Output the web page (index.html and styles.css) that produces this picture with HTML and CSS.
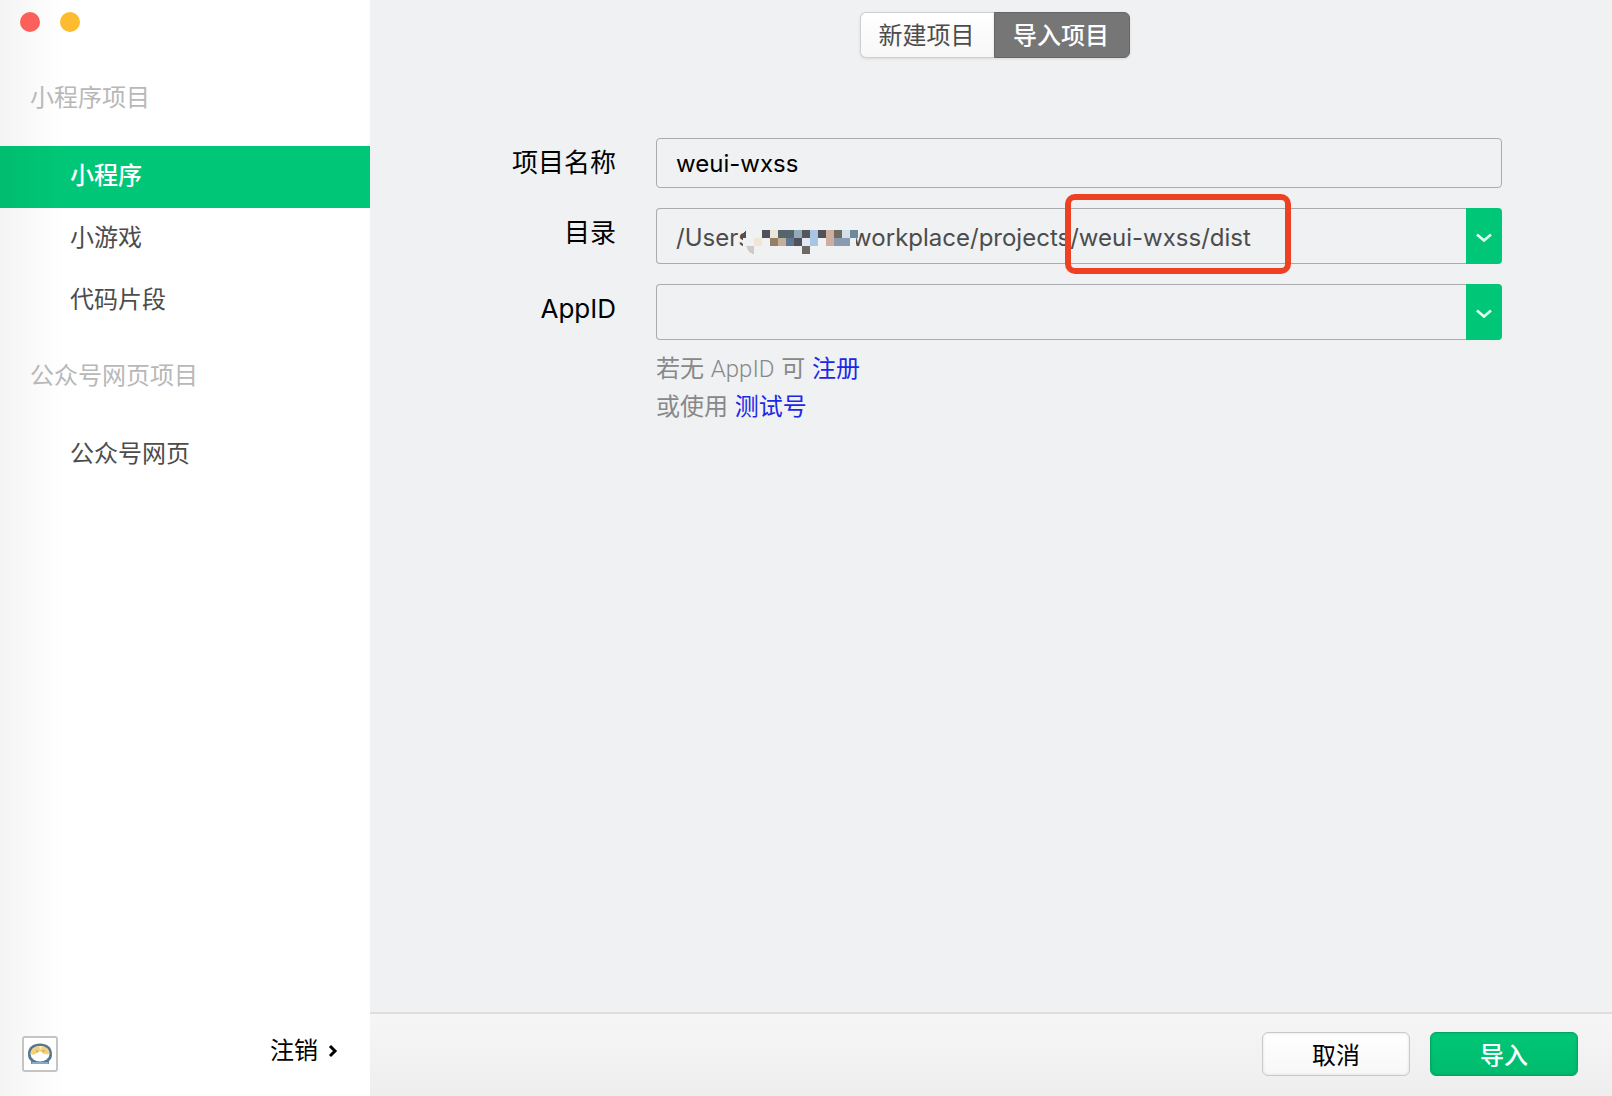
FILE: index.html
```html
<!DOCTYPE html>
<html lang="zh-CN">
<head>
<meta charset="utf-8">
<title>导入项目</title>
<link rel="stylesheet" href="styles.css">
</head>
<body>
<div class="window">
  <aside class="sidebar">
    <div class="window-controls">
      <button class="dot dot-close" type="button" aria-label="关闭"></button>
      <button class="dot dot-minimize" type="button" aria-label="最小化"></button>
    </div>
    <nav class="nav">
      <h2 class="nav-title">小程序项目</h2>
      <a class="nav-item active" href="#miniprogram">小程序</a>
      <a class="nav-item" href="#game">小游戏</a>
      <a class="nav-item" href="#snippet">代码片段</a>
      <h2 class="nav-title">公众号网页项目</h2>
      <a class="nav-item" href="#web">公众号网页</a>
    </nav>
    <div class="account">
      <svg class="avatar" viewBox="0 0 36 36" aria-hidden="true">
        <rect x="1" y="1" width="34" height="34" rx="2" fill="#fff" stroke="#c4c4c4" stroke-width="2"/>
        <path d="M9 28 V25 C6.500 23 6 21 6 18 C6 11 11 7.500 18 7.500 C25 7.500 30 11 30 18 C30 21 29.500 23 27 25 V28 Z" fill="#587890"/>
        <path d="M9.500 26 H26.500 V28 H9.500 Z" fill="#86aac5"/>
        <ellipse cx="18" cy="17.800" rx="9.500" ry="7.800" fill="#fff"/>
        <path d="M8.600 18 C8.500 13 13 10 18 10 C23.500 10 27.500 13 27.400 17.500 C25 20 23.500 17 21 18 C19 15 17.500 15 16 17 C14 17 12 20 8.600 18 Z" fill="#f6cf79"/>
        <path d="M17 10 H20 L18.500 14 Z" fill="#fff0cc"/>
        <circle cx="15" cy="15" r="1" fill="#d3a650"/><circle cx="21.500" cy="15" r="1" fill="#d3a650"/>
      </svg>
      <button class="logout" type="button">注销
        <svg width="10" height="14" viewBox="0 0 10 14" aria-hidden="true"><path d="M2 2 L7 7 L2 12" fill="none" stroke="#000" stroke-width="3"/></svg>
      </button>
    </div>
  </aside>

  <main class="main">
    <div class="tabs">
      <button class="tab" type="button">新建项目</button>
      <button class="tab selected" type="button">导入项目</button>
    </div>

    <form class="form">
      <label class="label" for="name">项目名称</label>
      <input class="field name-field" id="name" type="text" value="weui-wxss">

      <label class="label" for="path">目录</label>
      <div class="combo">
        <input class="field" id="path" type="text" value="/Users&nbsp;&nbsp;&nbsp;&nbsp;&nbsp;&nbsp;&nbsp;&nbsp;&nbsp;&nbsp;&nbsp;&nbsp;&nbsp;&nbsp;&nbsp;workplace/projects/weui-wxss/dist">
        <button class="combo-toggle" type="button" aria-label="选择目录">
          <svg width="16" height="10" viewBox="0 0 16 10" aria-hidden="true"><path d="M1 1.500 L8 7.500 L15 1.500" fill="none" stroke="#e0fff2" stroke-width="2.600"/></svg>
        </button>
        <svg class="mosaic" width="116" height="28" viewBox="0 0 116 28" shape-rendering="crispEdges" aria-hidden="true">
          <path d="M4 0 H114 V28 H4 Q-3 14 4 0 Z" fill="#eff1f3"/>
          <path d="M-1 8 L4 2 V10 H0 Z" fill="#50505a"/>
          <g>
            <rect x="20" y="2" width="8" height="8" fill="#50515b"/>
            <rect x="28" y="2" width="8" height="8" fill="#eee5da"/>
            <rect x="36" y="2" width="16" height="8" fill="#55656d"/>
            <rect x="52" y="2" width="8" height="8" fill="#93aabb"/>
            <rect x="60" y="2" width="8" height="8" fill="#55555b"/>
            <rect x="68" y="10" width="8" height="8" fill="#a9c5e4"/>
            <rect x="68" y="2" width="8" height="8" fill="#a9c5e4"/>
            <rect x="76" y="2" width="8" height="8" fill="#50515b"/>
            <rect x="84" y="2" width="8" height="16" fill="#ceae9f"/>
            <rect x="92" y="2" width="8" height="8" fill="#716a63"/>
            <rect x="100" y="2" width="8" height="8" fill="#d3e0ea"/>
            <rect x="108" y="2" width="8" height="8" fill="#6e899b"/>
            <rect x="12" y="10" width="8" height="8" fill="#f1e6d5"/>
            <rect x="28" y="10" width="8" height="8" fill="#94806a"/>
            <rect x="36" y="10" width="8" height="8" fill="#c4b094"/>
            <rect x="44" y="10" width="8" height="8" fill="#5e7795"/>
            <rect x="52" y="10" width="8" height="8" fill="#50515b"/>
            <rect x="60" y="10" width="8" height="8" fill="#e1eaf3"/>
            <rect x="92" y="10" width="16" height="8" fill="#8a9bb0"/>
            <path d="M4 18 H12 V26 Q6 25 4 18 Z" fill="#d0cac6"/>
            <rect x="60" y="18" width="8" height="8" fill="#6d6966"/>
          </g>
        </svg>
        <div class="highlight"></div>
      </div>

      <label class="label" for="appid">AppID</label>
      <div class="combo">
        <input class="field" id="appid" type="text" value="">
        <button class="combo-toggle" type="button" aria-label="选择 AppID">
          <svg width="16" height="10" viewBox="0 0 16 10" aria-hidden="true"><path d="M1 1.500 L8 7.500 L15 1.500" fill="none" stroke="#e0fff2" stroke-width="2.600"/></svg>
        </button>
      </div>

      <div class="hint">
        <p>若无 <span class="light">AppID</span> 可 <a href="#register">注册</a></p>
        <p>或使用 <a href="#test">测试号</a></p>
      </div>
    </form>

    <footer class="footer">
      <button class="button" type="button">取消</button>
      <button class="button primary" type="button">导入</button>
    </footer>
  </main>
</div>
</body>
</html>
```

FILE: styles.css
```css
* {
  box-sizing: border-box;
}

body {
  margin: 0;
  font-family: Inter, "Noto Sans CJK SC", sans-serif;
  font-size: 24px;
  color: #000;
}

button,
input {
  font: inherit;
  color: inherit;
  margin: 0;
}

button {
  padding: 0;
  border: 0;
  background: none;
}

h2,
p {
  margin: 0;
}

a {
  text-decoration: none;
}

.window {
  display: grid;
  grid-template-columns: 370px 1fr;
  min-height: 100vh;
}

.sidebar {
  display: flex;
  flex-direction: column;
  background: linear-gradient(to right, #f4f4f4, #fff 64px);
}

.window-controls {
  display: flex;
  gap: 20px;
  padding: 12px 20px 22px;
}

.dot {
  width: 20px;
  height: 20px;
  border-radius: 50%;
}

.dot-close {
  background: #fc605b;
}

.dot-minimize {
  background: #fdbc2f;
}

.nav {
  flex: 1;
}

.nav-title {
  padding: 0 30px 4px;
  font-size: 24px;
  font-weight: 400;
  line-height: 88px;
  color: #b8b8b8;
}

.nav-item {
  display: block;
  padding: 0 70px 2px;
  line-height: 60px;
  color: #4c4c4c;
}

.nav-item.active {
  font-weight: 500;
  color: #fff;
  background: linear-gradient(to right, #00bd70, #00c777 64px);
}

.account {
  display: flex;
  justify-content: space-between;
  align-items: flex-end;
  padding: 0 32px 24px 22px;
}

.avatar {
  width: 36px;
  height: 36px;
}

.logout {
  display: flex;
  align-items: center;
  gap: 10px;
  padding-bottom: 3px;
  line-height: 36px;
}

.main {
  display: flex;
  flex-direction: column;
  background: #eff1f3;
}

.tabs {
  display: flex;
  justify-content: center;
  padding: 12px 0 80px 8px;
}

.tab {
  width: 134px;
  height: 46px;
  padding: 0 2px 4px 0;
  color: #4c4c4c;
  background: linear-gradient(#fff, #f7f7f7);
  border: 1px solid #cfcfcf;
  border-right: 0;
  border-radius: 6px 0 0 6px;
  box-shadow: 0 1px 3px #0000001a;
}

.tab.selected {
  width: 136px;
  font-weight: 500;
  color: #fff;
  background: #767676;
  border: 1px solid #666;
  border-radius: 0 6px 6px 0;
}

.form {
  flex: 1;
  display: grid;
  grid-template-columns: 246px 1fr;
  align-content: start;
  gap: 20px 40px;
  padding-right: 110px;
}

.label {
  font-size: 26px;
  line-height: 50px;
  text-align: right;
}

.field {
  display: block;
  width: 100%;
  height: 56px;
  padding: 2px 19px 0;
  color: #4c4c4c;
  background: transparent;
  border: 1px solid #a9abad;
  border-radius: 4px;
}

.name-field {
  height: 50px;
  padding-top: 0;
  color: #000;
}

.combo {
  position: relative;
  display: flex;
}

.combo .field {
  border-right: 0;
  border-radius: 4px 0 0 4px;
}

.combo-toggle {
  display: flex;
  flex: none;
  align-items: center;
  justify-content: center;
  width: 36px;
  padding-top: 4px;
  background: #00c777;
  border-radius: 0 4px 4px 0;
}

.mosaic {
  position: absolute;
  left: 86px;
  top: 20px;
  overflow: visible;
}

.highlight {
  position: absolute;
  left: 409px;
  top: -14px;
  width: 226px;
  height: 80px;
  border: 6px solid #ee4124;
  border-radius: 10px;
  pointer-events: none;
}

.hint {
  grid-column: 2;
  margin-top: -10px;
  line-height: 38px;
  color: #888;
}

.hint a {
  color: #1c28e6;
}

.light {
  font-family: Roboto, sans-serif;
  font-weight: 300;
}

.footer {
  display: flex;
  justify-content: flex-end;
  gap: 20px;
  padding: 18px 34px 20px;
  background: linear-gradient(#f6f6f6, #eee);
  border-top: 2px solid #dedede;
}

.button {
  width: 148px;
  height: 44px;
  padding-bottom: 2px;
  background: linear-gradient(#fff, #f7f7f7);
  border: 1px solid #c9c9c9;
  border-radius: 6px;
  box-shadow: inset 0 0 3px #0000001f;
}

.button.primary {
  font-weight: 500;
  color: #fff;
  background: linear-gradient(#00c777, #00bb6e);
  border-color: #00a562;
}
```
